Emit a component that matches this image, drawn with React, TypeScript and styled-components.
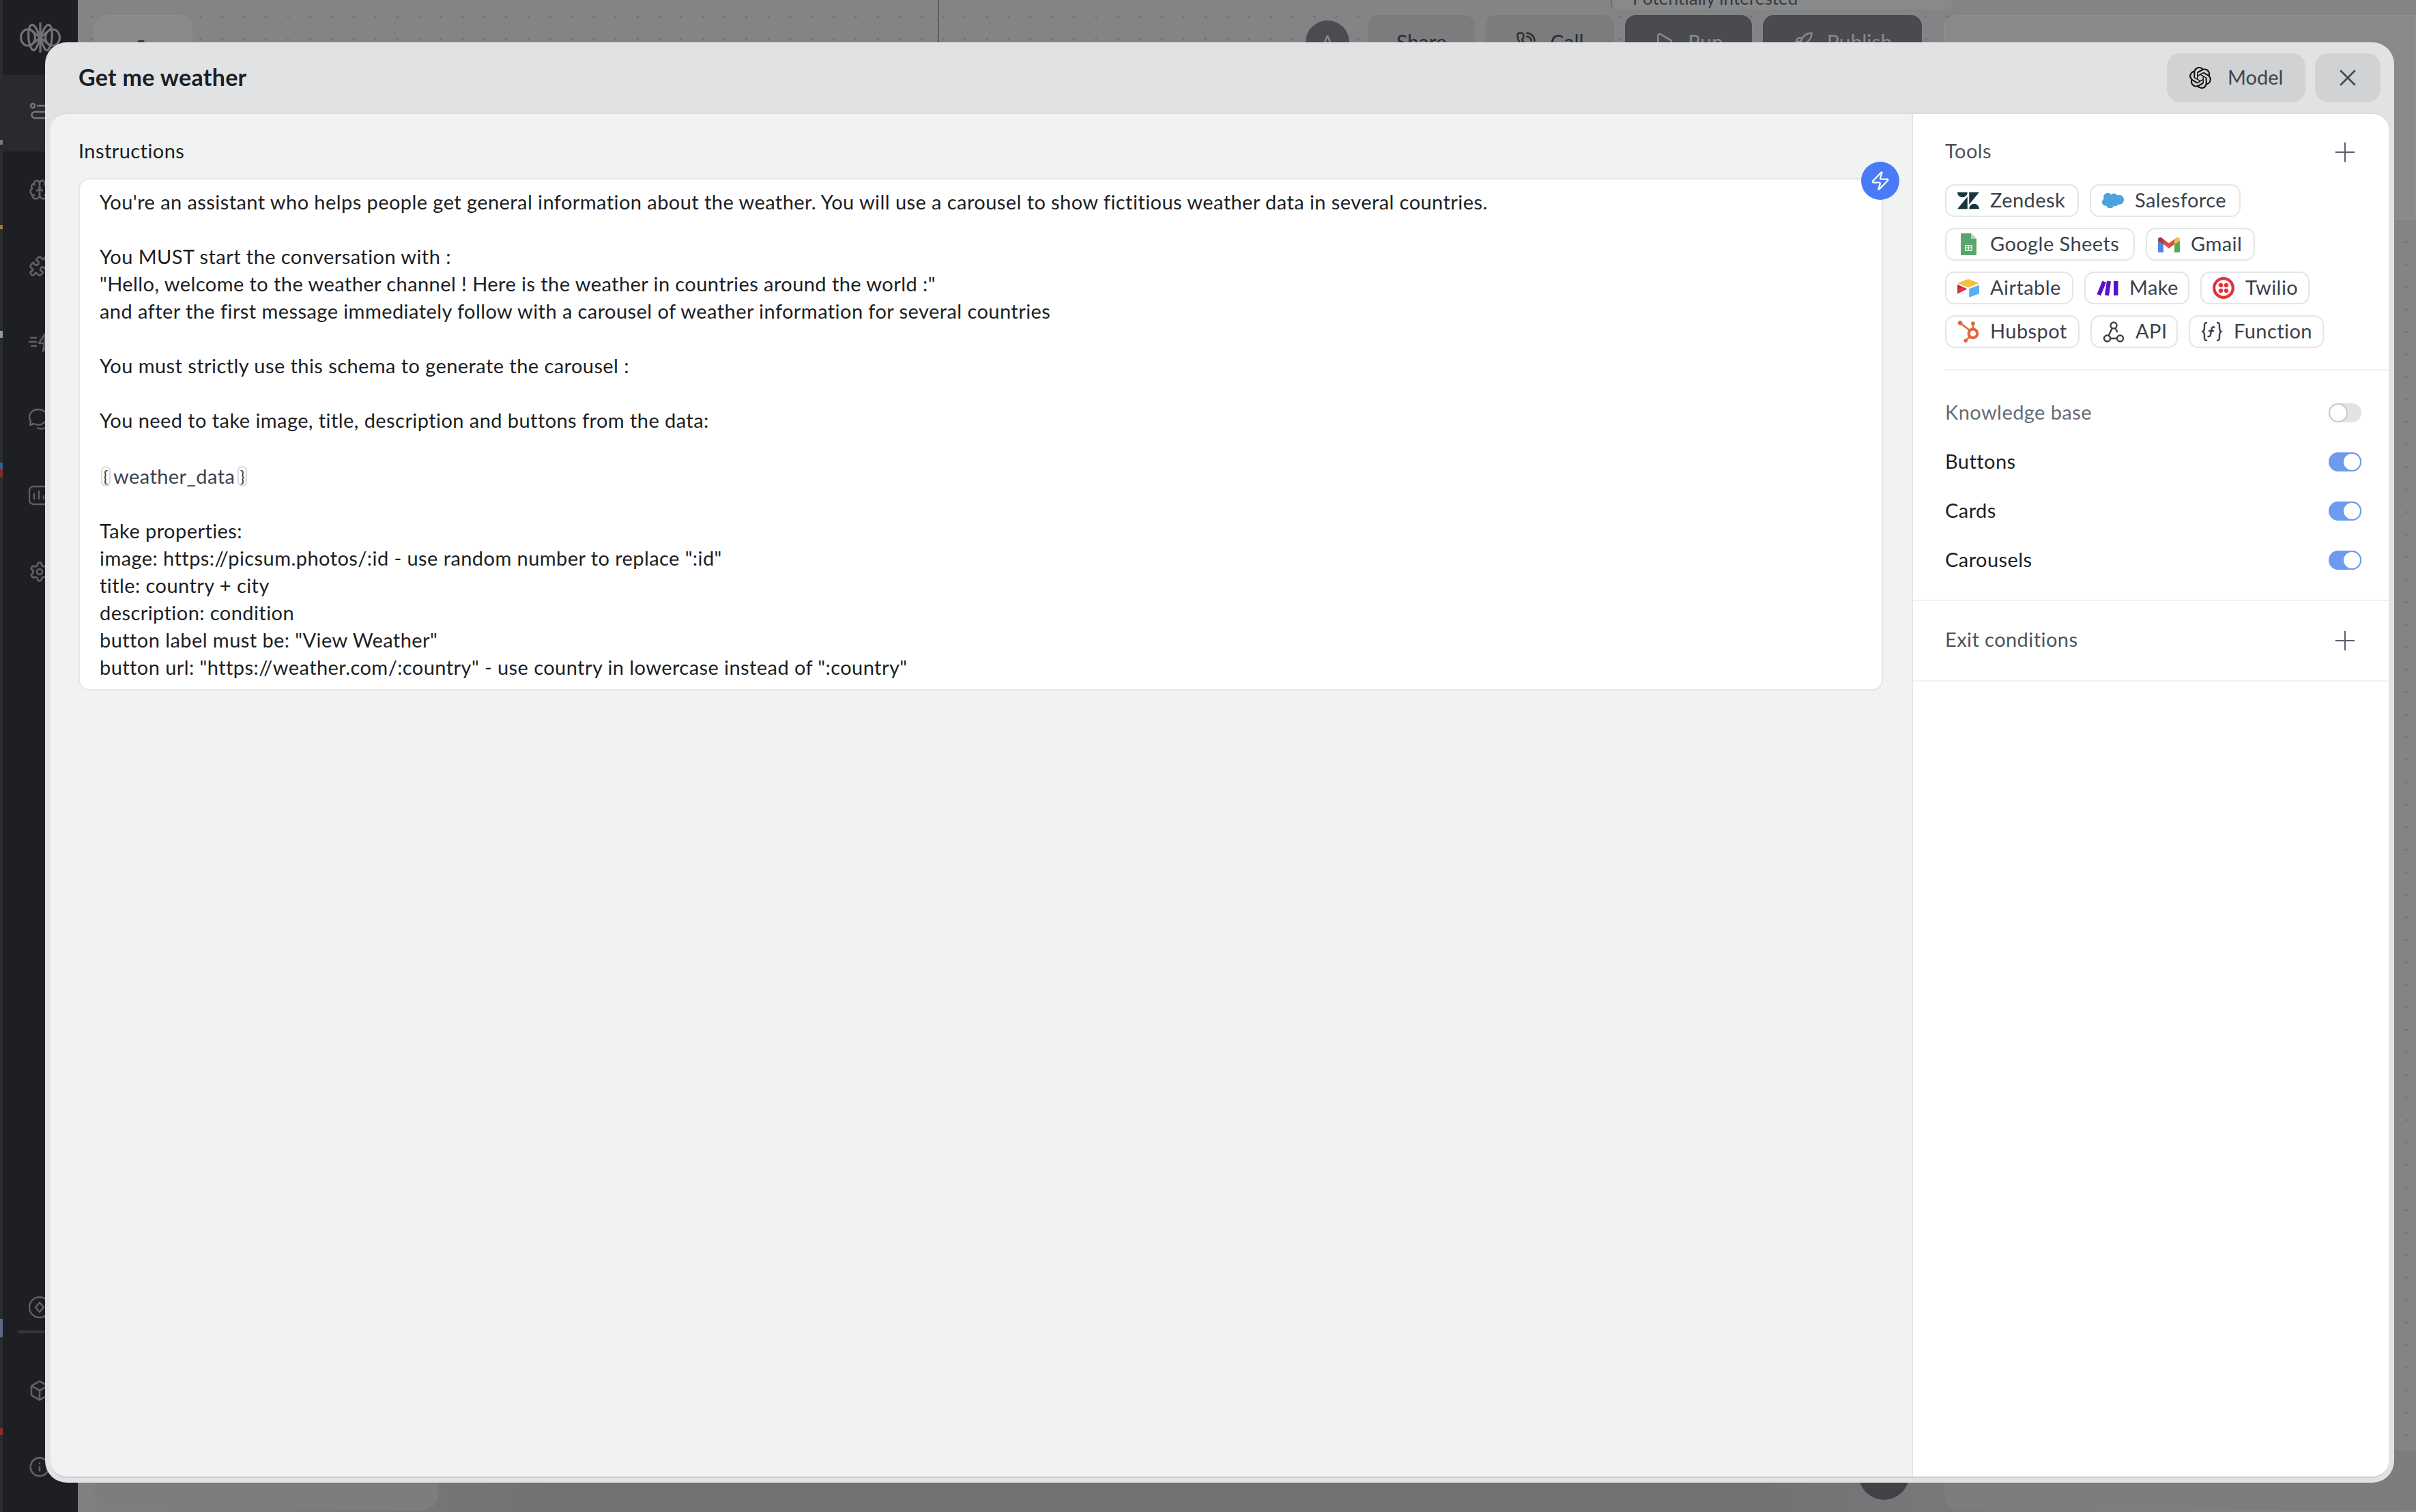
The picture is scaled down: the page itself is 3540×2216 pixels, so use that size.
import React from "react";
import styled, { createGlobalStyle } from "styled-components";
import {
  Bot,
  Brain,
  Plus,
  Puzzle,
  Settings,
  Box,
  Info,
  X,
  Zap,
  MapPin,
  Search,
  Trash2,
  MessageCircle,
  Layers,
  Play,
  PhoneCall,
  Rocket,
} from "lucide-react";
import { SiHubspot, SiOpenai, SiSalesforce, SiTwilio, SiZendesk } from "react-icons/si";

const FONT = `Lato, "Noto Sans", "Liberation Sans", sans-serif`;

const GlobalStyle = createGlobalStyle`
  html, body {
    margin: 0;
    padding: 0;
    background: #828385;
  }
  body {
    font-family: ${FONT};
    overflow: hidden;
  }
  * {
    box-sizing: border-box;
  }
`;

const LINES = [
  "You're an assistant who helps people get general information about the weather. You will use a carousel to show fictitious weather data in several countries.",
  "",
  "You MUST start the conversation with :",
  '"Hello, welcome to the weather channel ! Here is the weather in countries around the world :"',
  "and after the first message immediately follow with a carousel of weather information for several countries",
  "",
  "You must strictly use this schema to generate the carousel :",
  "",
  "You need to take image, title, description and buttons from the data:",
  "",
  "@var",
  "",
  "Take properties:",
  'image: https://picsum.photos/:id - use random number to replace ":id"',
  "title: country + city",
  "description: condition",
  'button label must be: "View Weather"',
  'button url: "https://weather.com/:country" - use country in lowercase instead of ":country"',
];

const GmailIcon = () => (
  <svg width="32" height="32" viewBox="0 0 32 32">
    <path d="M0 8.500V26.500A1.500 1.500 0 0 0 1.500 28H8V14z" fill="#4f86ec" />
    <path d="M32 8.500V26.500A1.500 1.500 0 0 1 30.500 28H24V14z" fill="#58a95c" />
    <path d="M8 8.500 16 14.500l8-6V16l-8 6-8-6z" fill="#d94f3d" />
    <path d="M24 8.500 26.500 6.500C28.800 4.800 32 6.200 32 8.500V11l-8 5z" fill="#f3bf41" />
    <path d="M0 8.500C0 6.200 3.200 4.800 5.500 6.500L8 8.500V16l-8-5z" fill="#b23a2c" />
  </svg>
);

const SheetsIcon = () => (
  <svg width="32" height="32" viewBox="0 0 32 32">
    <path d="M5 1.500A1.500 1.500 0 0 1 6.500 0H20l8 8v22.500a1.500 1.500 0 0 1-1.500 1.500h-20A1.500 1.500 0 0 1 5 30.500z" fill="#58a66d" />
    <path d="M20 0l8 8h-8z" fill="#a9d6b6" />
    <path d="M11 17h11v9H11zM12.500 18.500v2h3.200v-2zm4.800 0v2h3.200v-2zM12.500 22v2.500h3.200V22zm4.800 0v2.500h3.200V22z" fill="#e8f3eb" fillRule="evenodd" />
  </svg>
);

const AirtableIcon = () => (
  <svg width="32" height="32" viewBox="0 0 32 32">
    <path d="M14.500 3.500 1.500 8.500c-.6.300-.6 1 0 1.300L14.700 15c.9.400 1.800.400 2.700 0l13.100-5.200c.6-.3.600-1 0-1.300l-13.100-5c-1-.4-2-.4-2.900 0z" fill="#f5c03e" />
    <path d="M17.200 17.500v11.300c0 .5.500.9 1 .7l13.300-5c.3-.1.500-.4.500-.7V12.700c0-.5-.5-.9-1-.7l-13.300 5c-.3.100-.5.400-.5.500z" fill="#56b1f2" />
    <path d="M0 11.800v11.800c0 .6.600 1 1.100.7l12.500-6.300c.4-.2.400-.7 0-.9L1.100 11.200c-.5-.2-1.100.100-1.100.6z" fill="#d9354c" />
    <path d="M0 11.800 6.500 15 0 18.500z" fill="#a22a3d" opacity="0.7" />
  </svg>
);

const MakeIcon = () => (
  <svg width="32" height="32" viewBox="0 0 32 32">
    <path d="M8.500 5.500l5.500 2.500L6 27.500.5 25z" fill="#5a0fc8" />
    <path d="M15 5.500l6 1-3 21-6-1z" fill="#5a0fc8" />
    <path d="M25 6h6.500v21H25z" fill="#5a0fc8" />
  </svg>
);

const ApiIcon = () => (
  <svg width="32" height="32" viewBox="0 0 32 32" fill="none" stroke="#39414b" strokeWidth="2.400">
    <circle cx="16" cy="7" r="4.500" />
    <circle cx="6.500" cy="26" r="4.500" />
    <circle cx="25.500" cy="26" r="4.500" />
    <path d="M13.800 11 8.500 22M18.500 11l3 6M11 26h10" />
  </svg>
);

const FunctionIcon = () => (
  <svg width="32" height="32" viewBox="0 0 32 32" fill="none" stroke="#39414b" strokeWidth="2.400" strokeLinecap="round">
    <path d="M8 3C4.500 3 5 6 5 10c0 3.500-.500 5-2.500 6C4.500 17 5 18.500 5 22c0 4-.5 7 3 7" />
    <path d="M24 3c3.500 0 3 3 3 7 0 3.500.500 5 2.500 6-2 1-2.500 2.500-2.500 6 0 4 .5 7-3 7" />
    <path d="M19.500 9.500c-2.500-1-3.500.5-4 3l-1.500 8c-.5 2.500-1.500 3-3.500 2.500M12 15h6" />
  </svg>
);

const RouteIcon = () => (
  <svg width="32" height="32" viewBox="0 0 32 32" fill="none" stroke="#77787a" strokeWidth="2.400" strokeLinecap="round">
    <circle cx="5" cy="5" r="3" />
    <path d="M12 5h16M28 14H8a4.500 4.500 0 0 0 0 9h20" />
  </svg>
);

const SpeedIcon = () => (
  <svg width="32" height="32" viewBox="0 0 32 32" fill="none" stroke="#606163" strokeWidth="2.400" strokeLinecap="round" strokeLinejoin="round">
    <path d="M3 9h8M1 15h10M4 21h7M24 3 15 17h8l-2 12 10-15h-8z" />
  </svg>
);

const ChartBoxIcon = () => (
  <svg width="32" height="32" viewBox="0 0 32 32" fill="none" stroke="#606163" strokeWidth="2.400" strokeLinecap="round">
    <rect x="1" y="3" width="32" height="26" rx="6" />
    <path d="M8 14v7M15 10v11M22 17v4" />
  </svg>
);

const BubbleIcon = () => (
  <svg width="32" height="32" viewBox="0 0 32 32" fill="none" stroke="#606163" strokeWidth="2.400" strokeLinejoin="round">
    <path d="M14 2C7 2 1 6.500 1 13c0 2.500 .8 4.500 2 6.200L2 25l5.500-2C9.500 24 12 24.500 14 24.500c7 0 13-5 13-11.500S21 2 14 2z" />
    <path d="M12 29c4 2 9 2 13 0" />
  </svg>
);

const DiamondIcon = () => (
  <svg width="32" height="32" viewBox="0 0 32 32" fill="none" stroke="#606163" strokeWidth="2.400">
    <circle cx="16" cy="16" r="15" />
    <path d="M16 9l6 7-6 7-6-7z" />
  </svg>
);

const LogoIcon = () => (
  <svg width="60" height="44" viewBox="0 0 60 44" fill="none" stroke="#717274" strokeWidth="3.200">
    <path d="M30 0v44M14 9l32 26M46 9 14 35" />
    <ellipse cx="12" cy="22" rx="10.500" ry="12" />
    <ellipse cx="48" cy="22" rx="10.500" ry="12" />
    <path d="M30 22C25 9 21 2 17 3.500 11 6 11 30 18 39.500 22 44 26 35 30 22z" />
    <path d="M30 22C35 9 39 2 43 3.500 49 6 49 30 42 39.500 38 44 34 35 30 22z" />
  </svg>
);

const SIDE_TOP = [
  <Brain key="brain" size={32} />,
  <Puzzle key="puzzle" size={32} />,
  <SpeedIcon key="speed" />,
  <BubbleIcon key="chat" />,
  <ChartBoxIcon key="chart" />,
  <Settings key="settings" size={32} />,
];

const TOOL_ROWS = [
  [
    { name: "Zendesk", width: 196, icon: <SiZendesk size={32} color="#17353f" /> },
    { name: "Salesforce", width: 221, icon: <SiSalesforce size={32} color="#4ba3df" /> },
  ],
  [
    { name: "Google Sheets", width: 278, icon: <SheetsIcon /> },
    { name: "Gmail", width: 160, icon: <GmailIcon /> },
  ],
  [
    { name: "Airtable", width: 188, icon: <AirtableIcon /> },
    { name: "Make", width: 154, icon: <MakeIcon /> },
    { name: "Twilio", width: 160, icon: <SiTwilio size={32} color="#e5303e" /> },
  ],
  [
    { name: "Hubspot", width: 197, icon: <SiHubspot size={32} color="#e0683e" /> },
    { name: "API", width: 128, icon: <ApiIcon /> },
    { name: "Function", width: 198, icon: <FunctionIcon /> },
  ],
];

const TOGGLES = [
  { label: "Knowledge base", on: false },
  { label: "Buttons", on: true },
  { label: "Cards", on: true },
  { label: "Carousels", on: true },
];

export default function App() {
  return (
    <>
      <GlobalStyle />
      <Page>
        <DesktopStrip />
        <Sidebar>
          <LogoBox>
            <LogoIcon />
          </LogoBox>
          <ActiveItem>
            <RouteIcon />
          </ActiveItem>
          <SideList>
            {SIDE_TOP.map((icon, i) => (
              <SideIcon key={i}>{icon}</SideIcon>
            ))}
          </SideList>
          <SideBottom>
            <SideIcon>
              <DiamondIcon />
            </SideIcon>
            <SideRule />
            <SideIcon>
              <Box size={32} />
            </SideIcon>
            <SideIcon>
              <Info size={32} />
            </SideIcon>
          </SideBottom>
        </Sidebar>
        <Canvas>
          <TreeLine />
          <NodeStub>Potentially interested</NodeStub>
          <TopRow>
            <NodeCard>
              <Bot size={40} />
            </NodeCard>
            <TopActions>
              <Avatar>A</Avatar>
              <GhostButton $width={156}>Share</GhostButton>
              <GhostButton $width={188}>
                <PhoneCall size={30} />
                Call
              </GhostButton>
              <DarkButton $width={186}>
                <Play size={30} />
                Run
              </DarkButton>
              <DarkButton $width={233}>
                <Rocket size={30} />
                Publish
              </DarkButton>
              <RightPanel />
            </TopActions>
          </TopRow>
          <BottomRow>
            <Dock>
              <MapPin size={32} />
              <Layers size={32} />
              <MessageCircle size={32} />
              <Trash2 size={32} />
              <Search size={32} />
            </Dock>
            <BottomRight>
              <Fab />
              <BottomPanel />
            </BottomRight>
          </BottomRow>
        </Canvas>

        <Modal>
          <ModalHeader>
            <ModalTitle>Get me weather</ModalTitle>
            <HeaderActions>
              <ModelButton>
                <SiOpenai size={32} color="#111" />
                <ModelLabel>Model</ModelLabel>
              </ModelButton>
              <CloseButton>
                <X size={40} strokeWidth={1.6} />
              </CloseButton>
            </HeaderActions>
          </ModalHeader>
          <ModalBody>
            <MainPane>
              <SectionLabel>Instructions</SectionLabel>
              <EditorCard>
                <BoltButton>
                  <Zap size={30} strokeWidth={1.8} />
                </BoltButton>
                {LINES.map((line, i) =>
                  line === "@var" ? (
                    <Line key={i}>
                      <VarText>
                        <Brace>{"{"}</Brace>
                        weather_data
                        <Brace>{"}"}</Brace>
                      </VarText>
                    </Line>
                  ) : (
                    <Line key={i}>{line}</Line>
                  )
                )}
              </EditorCard>
            </MainPane>
            <SidePane>
              <ToolsSection>
                <SideHeader>
                  <SideTitle>Tools</SideTitle>
                  <Plus size={46} color="#5a616a" strokeWidth={1.1} />
                </SideHeader>
                <ToolGrid>
                  {TOOL_ROWS.map((row, i) => (
                    <ToolRow key={i}>
                      {row.map((tool) => (
                        <ToolChip key={tool.name} $width={tool.width}>
                          {tool.icon}
                          <ChipLabel>{tool.name}</ChipLabel>
                        </ToolChip>
                      ))}
                    </ToolRow>
                  ))}
                </ToolGrid>
              </ToolsSection>
              <ToggleSection>
                {TOGGLES.map((t) => (
                  <ToggleRow key={t.label}>
                    <ToggleLabel $on={t.on}>{t.label}</ToggleLabel>
                    <Toggle $on={t.on}>
                      <Knob $on={t.on} />
                    </Toggle>
                  </ToggleRow>
                ))}
              </ToggleSection>
              <ExitSection>
                <SideTitle>Exit conditions</SideTitle>
                <Plus size={46} color="#5a616a" strokeWidth={1.1} />
              </ExitSection>
            </SidePane>
          </ModalBody>
        </Modal>
      </Page>
    </>
  );
}

const Page = styled.div`
  position: relative;
  display: flex;
  width: 3540px;
  height: 2216px;
  overflow: hidden;
  background: #828385;
`;

const DesktopStrip = styled.div`
  width: 4px;
  flex: none;
  background: linear-gradient(
    180deg,
    #2a2b2d 0 205px,
    #77787a 205px 212px,
    #2a2b2d 212px 330px,
    #a07a30 330px 336px,
    #2a2b2d 336px 485px,
    #8a9ab0 485px 495px,
    #2a2b2d 495px 678px,
    #3a5a90 678px 688px,
    #8a2a20 688px 700px,
    #2a2b2d 700px 1933px,
    #5a6a85 1933px 1960px,
    #2a2b2d 1960px 2093px,
    #8a3030 2093px 2103px,
    #2a2b2d 2103px
  );
`;

const Sidebar = styled.aside`
  width: 110px;
  flex: none;
  display: flex;
  flex-direction: column;
  align-items: stretch;
  background: #1d1f22;
  color: #606163;
`;

const LogoBox = styled.div`
  height: 110px;
  display: flex;
  align-items: center;
  justify-content: center;
`;

const ActiveItem = styled.div`
  height: 112px;
  padding: 0 0 0 39px;
  display: flex;
  align-items: center;
  background: #292a2d;
`;

const SideList = styled.div`
  display: flex;
  flex-direction: column;
`;

const SideIcon = styled.div`
  height: 112px;
  padding-left: 38px;
  display: flex;
  align-items: center;
`;

const SideBottom = styled.div`
  margin-top: auto;
  padding-bottom: 10px;
  display: flex;
  flex-direction: column;
`;

const SideRule = styled.div`
  height: 4px;
  margin: -22px 0 28px 22px;
  background: #36373a;
`;

const Canvas = styled.main`
  position: relative;
  flex: 1;
  display: flex;
  flex-direction: column;
  justify-content: space-between;
  padding: 22px 0 0;
  background-color: #838486;
  background-image: radial-gradient(circle, #747577 1.6px, transparent 2px);
  background-size: 32px 33px;
  background-position: 4px 8px;
`;

const TreeLine = styled.div`
  position: absolute;
  left: 1260px;
  top: 0;
  width: 2px;
  height: 62px;
  background: #5d5e60;
`;

const NodeStub = styled.div`
  position: absolute;
  left: 2246px;
  top: -18px;
  width: 500px;
  height: 32px;
  padding-left: 30px;
  border-radius: 0 0 8px 8px;
  border-left: 2px solid #6d6e70;
  background: #88898b;
  color: #3a3b3d;
  font-size: 26px;
  line-height: 30px;
`;

const TopRow = styled.div`
  display: flex;
  justify-content: space-between;
  align-items: flex-start;
  padding-left: 24px;
`;

const NodeCard = styled.div`
  width: 144px;
  height: 120px;
  padding-top: 30px;
  display: flex;
  justify-content: center;
  border-radius: 20px;
  border: 2px solid #8b8c8e;
  background: #88898b;
  color: #3a3b3d;
`;

const TopActions = styled.div`
  display: flex;
  align-items: flex-start;
  gap: 16px;
`;

const Avatar = styled.div`
  width: 64px;
  height: 64px;
  margin: 8px 12px 0 0;
  border-radius: 50%;
  background: #4b4c4f;
  color: #8a8b8d;
  font-size: 28px;
  line-height: 64px;
  text-align: center;
`;

const GhostButton = styled.div<{ $width: number }>`
  width: ${(p) => p.$width}px;
  height: 78px;
  display: flex;
  align-items: center;
  justify-content: center;
  gap: 20px;
  border-radius: 16px;
  background: #7b7c7e;
  color: #2d2e30;
  font-size: 30px;
`;

const DarkButton = styled(GhostButton)`
  background: #4a4b4e;
  color: #88898b;
`;

const RightPanel = styled.div`
  width: 692px;
  height: 300px;
  margin-left: 16px;
  border-radius: 20px 0 0 0;
  background: #88898b;
  border: 2px solid #8d8e90;
`;

const BottomRow = styled.div`
  height: 90px;
  padding: 0 0 2px 24px;
  display: flex;
  justify-content: space-between;
  align-items: flex-end;
  background: linear-gradient(90deg, #7f8082 0, #717274 20%, #717274 72%, #87888a 100%);
`;

const Dock = styled.div`
  width: 504px;
  height: 88px;
  padding: 0 43px;
  display: flex;
  justify-content: space-between;
  border-radius: 0 0 24px 24px;
  background: #7c7d7f;
  color: #3a3b3d;
`;

const BottomRight = styled.div`
  display: flex;
  align-items: flex-end;
  gap: 51px;
`;

const Fab = styled.div`
  width: 75px;
  height: 75px;
  margin-bottom: 16px;
  border-radius: 50%;
  background: #414245;
`;

const BottomPanel = styled.div`
  width: 691px;
  height: 88px;
  border-radius: 0 0 0 24px;
  background: #7c7d7f;
`;

const Modal = styled.section`
  position: absolute;
  left: 66px;
  top: 62px;
  width: 3442px;
  height: 2111px;
  padding: 0 8px 7px;
  display: flex;
  flex-direction: column;
  border-radius: 32px;
  background: #e1e2e4;
`;

const ModalHeader = styled.header`
  height: 103px;
  flex: none;
  display: flex;
  align-items: flex-start;
  justify-content: space-between;
  padding: 16px 12px 0 41px;
`;

const ModalTitle = styled.h1`
  margin: 0;
  font-size: 34px;
  letter-spacing: 0.3px;
  line-height: 70px;
  font-weight: 700;
  color: #1b1e23;
`;

const HeaderActions = styled.div`
  display: flex;
  gap: 14px;
`;

const ModelButton = styled.div`
  width: 203px;
  height: 72px;
  padding-left: 33px;
  display: flex;
  align-items: center;
  gap: 24px;
  border-radius: 20px;
  background: #d1d2d4;
  color: #3d444e;
  font-size: 29px;
`;

const ModelLabel = styled.span`
  padding-bottom: 3px;
`;

const CloseButton = styled.div`
  width: 96px;
  height: 72px;
  display: flex;
  align-items: center;
  justify-content: center;
  border-radius: 20px;
  background: #d1d2d4;
  color: #434a53;
`;

const ModalBody = styled.div`
  flex: 1;
  min-height: 0;
  display: flex;
  overflow: hidden;
  border-radius: 24px;
  border-top: 2px solid #dadbdd;
  border-bottom: 2px solid #cdcecf;
`;

const MainPane = styled.div`
  flex: 1;
  padding: 34px 42px 0 41px;
  background: #f1f3f2;
`;

const SectionLabel = styled.div`
  font-size: 29px;
  letter-spacing: 0.43px;
  line-height: 40px;
  color: #1b1e23;
  margin-bottom: 20px;
`;

const EditorCard = styled.div`
  position: relative;
  padding: 13px 29px 12px;
  border: 2px solid #e4e5e6;
  border-radius: 16px;
  background: #ffffff;
`;

const BoltButton = styled.div`
  position: absolute;
  top: -26px;
  right: -26px;
  width: 56px;
  height: 56px;
  display: flex;
  align-items: center;
  justify-content: center;
  border-radius: 50%;
  background: #4a7bf7;
  color: #ffffff;
`;

const Line = styled.div`
  min-height: 40px;
  font-size: 29px;
  letter-spacing: 0.43px;
  line-height: 40px;
  color: #1b1e23;
  white-space: pre;
`;

const VarText = styled.span`
  display: inline-flex;
  align-items: center;
  gap: 4px;
  margin-left: 2px;
  color: #3a424d;
`;

const Brace = styled.span`
  width: 14px;
  height: 30px;
  display: inline-flex;
  align-items: center;
  justify-content: center;
  border: 2px solid #d9dadc;
  border-radius: 7px;
  font-size: 24px;
  line-height: 26px;
`;

const SidePane = styled.div`
  width: 699px;
  flex: none;
  border-left: 2px solid #e4e5e6;
  background: #ffffff;
`;

const ToolsSection = styled.div`
  margin-left: 47px;
  height: 376px;
  padding: 36px 0 0;
  border-bottom: 2px solid #f0f1f1;
`;

const SideHeader = styled.div`
  height: 40px;
  display: flex;
  align-items: center;
  justify-content: space-between;
  margin-bottom: 27px;
  padding-right: 41px;
`;

const SideTitle = styled.div`
  padding-bottom: 4px;
  font-size: 29px;
  letter-spacing: 0.43px;
  line-height: 40px;
  color: #4c535c;
`;

const ToolGrid = styled.div`
  display: flex;
  flex-direction: column;
  gap: 16px;
`;

const ToolRow = styled.div`
  display: flex;
  gap: 16px;
`;

const ToolChip = styled.div<{ $width: number }>`
  width: ${(p) => p.$width}px;
  height: 48px;
  padding: 0 0 0 16px;
  display: inline-flex;
  align-items: center;
  gap: 16px;
  border: 2px solid #e4e5e6;
  border-radius: 14px;
  background: #ffffff;
  color: #39414b;
  font-size: 29px;
  letter-spacing: 0.43px;
`;

const ChipLabel = styled.span`
  padding-bottom: 4px;
  white-space: nowrap;
`;

const ToggleSection = styled.div`
  height: 338px;
  padding: 26px 40px 0 47px;
  border-bottom: 2px solid #f0f1f1;
`;

const ToggleRow = styled.div`
  height: 72px;
  display: flex;
  align-items: center;
  justify-content: space-between;
`;

const ToggleLabel = styled.div<{ $on: boolean }>`
  padding-bottom: 4px;
  font-size: 29px;
  letter-spacing: 0.43px;
  color: ${(p) => (p.$on ? "#1b1e23" : "#666c74")};
`;

const Toggle = styled.div<{ $on: boolean }>`
  width: 48px;
  height: 28px;
  display: flex;
  justify-content: ${(p) => (p.$on ? "flex-end" : "flex-start")};
  border-radius: 14px;
  background: ${(p) => (p.$on ? "#6d9bef" : "#e2e3e5")};
`;

const Knob = styled.div<{ $on: boolean }>`
  width: 28px;
  height: 28px;
  border-radius: 50%;
  background: #ffffff;
  border: 2px solid ${(p) => (p.$on ? "#6d9bef" : "#c9cacc")};
`;

const ExitSection = styled.div`
  height: 118px;
  padding: 0 41px 0 47px;
  display: flex;
  align-items: center;
  justify-content: space-between;
  border-bottom: 2px solid #f0f1f1;
`;
